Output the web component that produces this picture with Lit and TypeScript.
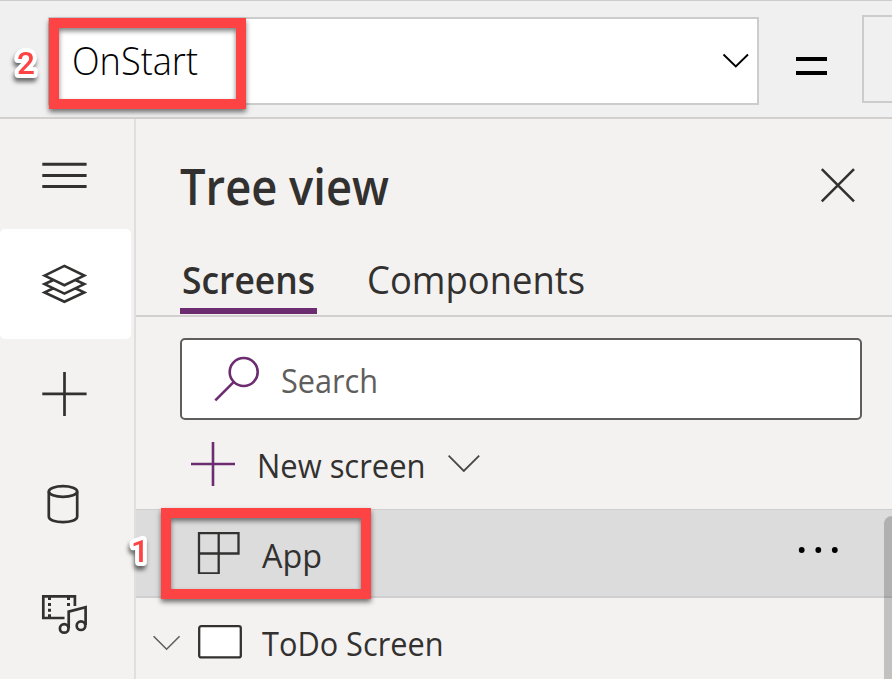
import { LitElement, html, svg, css } from "lit";
import { customElement, property } from "lit/decorators.js";

/** A single line of text set to an exact measure; the baseline sits `size` below the top. */
@customElement("ui-label")
class UiLabel extends LitElement {
  @property() text = "";
  @property({ type: Number }) size = 32;
  @property({ type: Number }) measure = 100;

  static styles = css`
    :host { display: block; flex: none; }
    svg { display: block; overflow: visible; }
    text { fill: currentColor; font-family: inherit; font-weight: inherit; }
  `;

  render() {
    return html`<svg width=${this.measure} height=${this.size}>
      <text x="0" y=${this.size} font-size=${this.size} textLength=${this.measure} lengthAdjust="spacingAndGlyphs">${this.text}</text>
    </svg>`;
  }
}

/** Numbered red frame laid over the interface. */
@customElement("call-out")
class CallOut extends LitElement {
  @property() num = "";

  static styles = css`
    :host { display: block; position: absolute; box-sizing: border-box; height: 91px; border: 10px solid #fd4343;
      box-shadow: 0 3px 5px rgba(0,0,0,.55), inset 0 3px 5px rgba(0,0,0,.5); }
    svg { position: absolute; left: var(--num-x, -54px); top: var(--num-y, 12px); overflow: visible; filter: drop-shadow(-1px 4px 2px rgba(0,0,0,.55)); }
    text { font: 500 31.5px Roboto, sans-serif; paint-order: stroke; fill: #fd4343; stroke: #fff; stroke-width: 8px; stroke-linejoin: round; }
  `;

  render() {
    return html`<svg width="30" height="36"><text x="12" y="34">${this.num}</text></svg>`;
  }
}

const layers = svg`<path d="M44.6 275.6L64.4 265.9L84.2 275.6L64.4 285.2ZM53.5 280L44.6 284.1L64.4 293.6L84.2 284.1L75.3 280M53.5 288.2L44.6 292.4L64.4 301.8L84.2 292.4L75.3 288.2"/>`;
const cylinder = svg`<ellipse cx="63" cy="491.5" rx="14.2" ry="5.4"/><path d="M48.8 491.5V516.5C48.8 524 77.2 524 77.2 516.5V491.5"/>`;
const media = svg`<path d="M64.5 618H43.3V596.3H74.9V606M68.7 628V611.6L85.6 607.2V625"/><circle cx="64.2" cy="628.4" r="4.3"/><circle cx="81" cy="625.7" r="4.3"/>
  <path class="fill" d="M48 597h3v3h-3zM48 603h3v3h-3zM48 608.7h3v3h-3zM48 614.3h3v3h-3zM67 597h3v3h-3zM67 603h3v3h-3z"/>`;

@customElement("app-root")
class AppRoot extends LitElement {
  static styles = css`
    :host { display: grid; grid-template: 119px 560px / 892px; position: relative; width: 892px; height: 679px; overflow: hidden;
      background: #f3f2f1; color: #323130; font-family: "Open Sans", "Noto Sans", sans-serif; }
    * { box-sizing: border-box; }
    svg { display: block; flex: none; fill: none; stroke: currentColor; stroke-width: 2.3; }
    .bar { display: flex; background: #f0f0f0; border-top: 1px solid #ccc; border-bottom: 2px solid #d2d0ce; padding-left: 48px; color: #000; }
    .bar > * { flex: none; }
    .select { display: flex; width: 711px; height: 88px; margin-top: 16px; border: 2px solid #ccc; background: #fff; padding: 0 8.5px 0 21.5px; justify-content: space-between; }
    .select ui-label { margin-top: 17px; font-weight: 300; }
    .select svg { margin-top: 33px; stroke-width: 1.9; }
    .equals { width: 31px; height: 18px; margin: 56px 35px 0 37px; border: solid #000; border-width: 4px 0; }
    .formula { width: 40px; height: 88px; margin-top: 14px; border: 2px solid #ccc; }
    .body { display: grid; grid-template-columns: 136px 1fr; }
    .rail { border-right: 2px solid #e1dfdd; }
    .item { display: flex; width: 131px; height: 110px; }
    .item.active { background: #fff; border-radius: 5px; }
    .item svg { stroke-width: 2.7; }
    .item .fill { fill: currentColor; stroke: none; }
    .head { display: flex; justify-content: space-between; padding: 36px 36px 0 44px; height: 136px; font-weight: 600; }
    .head svg { margin-top: 12px; stroke-width: 2.5; }
    .tabs { display: flex; height: 62px; padding-left: 44px; border-bottom: 2px solid #d2d0ce; gap: 50px; }
    .tab { height: 59px; padding-top: 1px; }
    .tab.on { width: 137px; padding-left: 2px; border-bottom: 6px solid #6b2c70; font-weight: 600; }
    .search { display: flex; width: 682px; height: 82px; margin: 21px 0 0 44px; border: 2px solid #605e5c; border-radius: 5px; background: #fff; padding-left: 31px; color: #605e5c; }
    .search svg { color: #6b2c70; margin: 16px 22px 0 0; stroke-width: 2.6; }
    .search ui-label { margin-top: 20px; }
    .new { display: flex; height: 89px; padding: 22px 0 0 55px; }
    .new .plus { color: #6b2c70; stroke-width: 2.6; }
    .new ui-label { margin: 2px 22px 0 22px; }
    .new .chev { margin-top: 12px; color: #484644; stroke-width: 1.8; }
    .row { display: flex; height: 89px; }
    .row.sel { background: #dcdcdc; border-top: 1px solid #cfcfcf; border-bottom: 2px solid #cfcfcf; padding-left: 61px; }
    .row.sel ui-label { margin: 24px 475.5px 0 22px; }
    .row.sel .grid { margin-top: 21px; }
    .row.sel .dots { margin-top: 36px; fill: #000; stroke: none; }
    .todo { padding-left: 17px; }
    .todo .chev { margin: 37px 17px 0 0; color: #605e5c; stroke-width: 1.6; }
    .todo .screen { margin: 27px 19.5px 0 0; }
    .todo ui-label { margin-top: 24px; }
    .thumb { position: absolute; left: 884px; top: 516px; width: 16px; height: 180px; border-radius: 8px; background: rgba(0,0,0,.2); }
    .c2 { left: 49px; top: 18px; width: 197px; }
    .c1 { left: 161px; top: 508px; width: 210px; --num-x: -52px; --num-y: 10px; }
  `;

  private item(top: number, icon: unknown, cls = "") {
    return html`<div class="item ${cls}"><svg width="131" height="110" viewBox="0 ${top} 131 110">${icon}</svg></div>`;
  }

  render() {
    return html`
      <header class="bar">
        <div class="select">
          <ui-label text="OnStart" size="38.5" measure="126"></ui-label>
          <svg width="27" height="16"><path d="M1.5 2.5L13.8 14.5L26 2.5"/></svg>
        </div>
        <div class="equals"></div>
        <div class="formula"></div>
      </header>
      <div class="body">
        <nav class="rail">
          ${this.item(119, svg`<path stroke-width="3" d="M42.3 164.3H86.6M42.3 175.5H86.6M42.3 186.5H86.6"/>`)}
          ${this.item(229, layers, "active")}
          ${this.item(339, svg`<path d="M42.3 393.8H86.6M64.5 372V416"/>`)}
          ${this.item(449, cylinder)}
          ${this.item(559, media)}
        </nav>
        <main>
          <div class="head">
            <ui-label text="Tree view" size="50" measure="209"></ui-label>
            <svg width="36" height="36"><path d="M1.8 2.2L34 34.4M34 2.2L1.8 34.4"/></svg>
          </div>
          <div class="tabs">
            <div class="tab on"><ui-label text="Screens" size="38" measure="133"></ui-label></div>
            <div class="tab"><ui-label text="Components" size="38" measure="218"></ui-label></div>
          </div>
          <div class="search">
            <svg width="46" height="46"><circle cx="30.7" cy="16" r="14"/><path d="M2.3 44.3L20.8 25.8"/></svg>
            <ui-label text="Search" size="33" measure="97"></ui-label>
          </div>
          <div class="new">
            <svg class="plus" width="44" height="44"><path d="M0 22H44M22 0V44"/></svg>
            <ui-label text="New screen" size="33.5" measure="168.5"></ui-label>
            <svg class="chev" width="32" height="18"><path d="M.6 1.6L15.8 17L31.2 1.6"/></svg>
          </div>
          <div class="row sel">
            <svg class="grid" width="43" height="43"><path d="M2 2.2H41.5V22.5H2ZM2 2.2V42.3H21.7V2.2"/></svg>
            <ui-label text="App" size="33.5" measure="60"></ui-label>
            <svg class="dots" width="42" height="8"><circle cx="3.7" cy="4" r="2.9"/><circle cx="20.3" cy="4" r="2.9"/><circle cx="36.8" cy="4" r="2.9"/></svg>
          </div>
          <div class="row todo">
            <svg class="chev" width="28" height="17"><path d="M.6 1.2L13.6 14.2L26.6 1.2"/></svg>
            <svg class="screen" width="44" height="34"><rect x="1.2" y="1.2" width="41.6" height="31.2" rx="2" fill="#fff"/></svg>
            <ui-label text="ToDo Screen" size="33.5" measure="181.5"></ui-label>
          </div>
        </main>
      </div>
      <div class="thumb"></div>
      <call-out class="c2" num="2"></call-out>
      <call-out class="c1" num="1"></call-out>
    `;
  }
}
